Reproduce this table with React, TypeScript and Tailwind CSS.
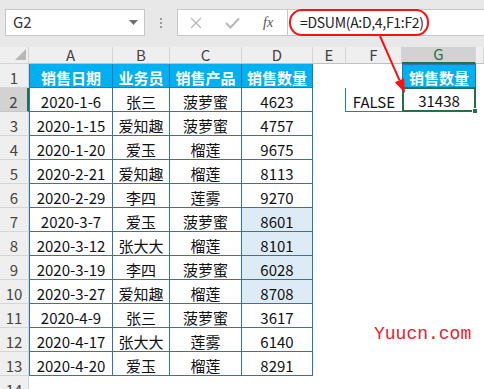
const rows: string[][] = [
  ['2020-1-6', '张三', '菠萝蜜', '4623'],
  ['2020-1-15', '爱知趣', '菠萝蜜', '4757'],
  ['2020-1-20', '爱玉', '榴莲', '9675'],
  ['2020-2-21', '爱知趣', '榴莲', '8113'],
  ['2020-2-29', '李四', '莲雾', '9270'],
  ['2020-3-7', '爱玉', '菠萝蜜', '8601'],
  ['2020-3-12', '张大大', '榴莲', '8101'],
  ['2020-3-19', '李四', '菠萝蜜', '6028'],
  ['2020-3-27', '爱知趣', '榴莲', '8708'],
  ['2020-4-9', '张三', '菠萝蜜', '3617'],
  ['2020-4-17', '张大大', '莲雾', '6140'],
  ['2020-4-20', '爱玉', '榴莲', '8291'],
];

const grid = 'grid grid-cols-[29px_84px_57px_72px_71px_33px_56px_74px_8px]';
const cell = 'h-[24px] flex items-end justify-center pb-[2px] leading-[15px] text-[15px]';
const tb = 'border-[#2e75b6]';

function RowHead({ n, active }: { n: number; active?: boolean }) {
  return (
    <div
      className={`${cell} border-b border-r ${
        active ? 'bg-[#d2d2d2] border-r-2 border-r-[#217346] border-b-[#c6c6c6]' : 'bg-[#efefef] border-[#d5d5d5]'
      } text-[#444] pb-[1px]`}
    >
      {n}
    </div>
  );
}

function TopBar() {
  return (
    <div className="h-[47px] bg-[#e8e8e8] flex items-start pt-[9px] pl-[5px]">
      <div className="w-[140px] h-[27px] bg-white border border-[#c6c6c6] flex items-center justify-between pl-[7px] pr-[6px] text-[15px] text-[#333]">
        <span>G2</span>
        <svg width="9" height="5" viewBox="0 0 9 5"><polygon points="0,0 9,0 4.5,5" fill="#707070" /></svg>
      </div>
      <div className="w-[32px] h-[27px] flex flex-col items-center justify-center gap-[2px]">
        <span className="w-[2px] h-[2px] bg-[#9a9a9a]" />
        <span className="w-[2px] h-[2px] bg-[#9a9a9a]" />
        <span className="w-[2px] h-[2px] bg-[#9a9a9a]" />
      </div>
      <div className="w-[111px] h-[27px] bg-white border border-[#c6c6c6] flex items-center pl-[12px] gap-[23px]">
        <svg width="12" height="12" viewBox="0 0 12 12"><path d="M1 1L11 11M11 1L1 11" stroke="#b9b9b9" strokeWidth="1.4" /></svg>
        <svg width="15" height="12" viewBox="0 0 15 12"><path d="M1 6L5.5 10.5L14 1.5" stroke="#b9b9b9" strokeWidth="2" fill="none" /></svg>
        <span className="text-[14px] italic text-[#555] font-['Liberation_Serif',serif]">fx</span>
      </div>
      <div className="flex-1 h-[27px] bg-white border-y border-[#c6c6c6] flex items-stretch pl-[1px]">
        <div className="w-[140px] -mt-[1px] h-[27px] border-2 border-[#ff1010] rounded-[13px] flex items-center pl-[9px] text-[14px] tracking-[-0.3px] text-[#222] whitespace-nowrap">
          =DSUM(A:D,4,F1:F2)
        </div>
      </div>
    </div>
  );
}

export default function App() {
  return (
    <div className="relative w-[484px] h-[389px] overflow-hidden bg-white font-['Noto_Sans_CJK_SC','Noto_Sans',sans-serif] text-[#111]">
      <TopBar />
      {/* column headers */}
      <div className={grid}>
        <div className="h-[17px] bg-[#efefef] border-r border-b border-[#d5d5d5] relative">
          <svg className="absolute right-[2px] bottom-[3px]" width="11" height="11" viewBox="0 0 11 11"><polygon points="11,0 11,11 0,11" fill="#b8b8b8" /></svg>
        </div>
        {['A', 'B', 'C', 'D', 'E', 'F', 'G', ''].map((c) => (
          <div
            key={c || 'H'}
            className={`h-[17px] flex items-end justify-center leading-[15px] text-[15px] pb-[1px] border-r border-[#d5d5d5] ${
              c === 'G' ? 'bg-[#d2d2d2] text-[#217346] border-b-2 border-b-[#217346]' : 'bg-[#efefef] text-[#444] border-b border-b-[#c0c0c0]'
            }`}
          >
            {c}
          </div>
        ))}
      </div>
      {/* row 1 */}
      <div className={grid}>
        <RowHead n={1} />
        {['销售日期', '业务员', '销售产品', '销售数量'].map((h, i) => (
          <div key={h} className={`${cell} bg-[#00b0f0] text-white font-bold border-r border-b ${tb} ${i === 0 ? 'border-l' : ''}`}>
            {h}
          </div>
        ))}
        <div />
        <div />
        <div className={`${cell} bg-[#00b0f0] text-white font-bold border ${tb}`}>销售数量</div>
        <div />
      </div>
      {rows.map((r, i) => {
        const n = i + 2;
        const hl = n >= 7 && n <= 10;
        return (
          <div key={n} className={grid}>
            <RowHead n={n} active={n === 2} />
            <div className={`${cell} border-l border-r border-b ${tb}`}>{r[0]}</div>
            <div className={`${cell} border-r border-b ${tb}`}>{r[1]}</div>
            <div className={`${cell} border-r border-b ${tb}`}>{r[2]}</div>
            <div className={`${cell} border-r border-b ${tb} ${hl ? 'bg-[#ddebf7]' : ''}`}>{r[3]}</div>
            <div />
            {n === 2 ? (
              <>
                <div className={`${cell} -ml-[1px] border-l border-b ${tb}`}>FALSE</div>
                <div className={`${cell} relative border-2 border-[#217346] -mt-[1px] h-[25px]`}>
                  31438
                  <span className="absolute -right-[4px] -bottom-[4px] w-[6px] h-[6px] bg-[#217346] border border-white" />
                </div>
              </>
            ) : (
              <>
                <div />
                <div />
              </>
            )}
            <div />
          </div>
        );
      })}
      <div className={grid}>
        <RowHead n={14} />
      </div>

      <svg className="absolute inset-0 pointer-events-none" width="484" height="389">
        <line x1="380" y1="36" x2="399.4" y2="80.2" stroke="#ff1010" strokeWidth="2" />
        <polygon points="405,93 404,78.2 394.8,82.2" fill="#ff1010" />
      </svg>
      <div className="absolute left-[374px] top-[323px] font-['Liberation_Mono',monospace] text-[18px] leading-[22px] text-[#e8202e]">
        Yuucn.com
      </div>
    </div>
  );
}
